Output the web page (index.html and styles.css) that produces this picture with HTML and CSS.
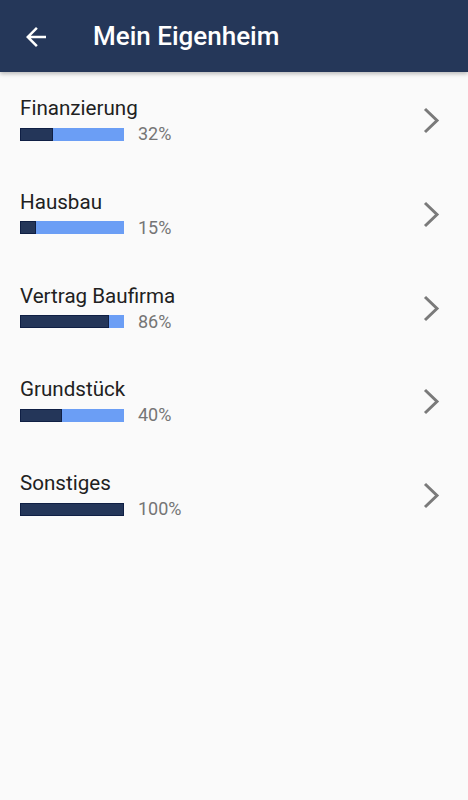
FILE: index.html
```html
<!DOCTYPE html>
<html lang="de">
<head>
    <meta charset="UTF-8">
    <meta name="viewport" content="width=device-width, initial-scale=1.0">
    <title>Mein Eigenheim</title>
    <link rel="stylesheet" href="styles.css">
</head>
<body>
    <header class="toolbar">
        <button class="back" aria-label="Zurück">
            <svg width="30" height="30" viewBox="0 0 24 24">
                <path d="M20 11H7.83l5.59-5.59L12 4l-8 8 8 8 1.41-1.41L7.83 13H20v-2z" fill="#fff"/>
            </svg>
        </button>
        <h1>Mein Eigenheim</h1>
    </header>

    <ul class="list">
        <li class="item">
            <div class="info">
                <div class="name">Finanzierung</div>
                <div class="progress">
                    <div class="bar"><div class="fill" style="width: 32%"></div></div>
                    <span class="pct">32%</span>
                </div>
            </div>
            <svg class="chevron" width="18" height="28" viewBox="0 0 18 28"><polyline points="3,3 15,14.5 3,26"/></svg>
        </li>
        <li class="item">
            <div class="info">
                <div class="name">Hausbau</div>
                <div class="progress">
                    <div class="bar"><div class="fill" style="width: 15%"></div></div>
                    <span class="pct">15%</span>
                </div>
            </div>
            <svg class="chevron" width="18" height="28" viewBox="0 0 18 28"><polyline points="3,3 15,14.5 3,26"/></svg>
        </li>
        <li class="item">
            <div class="info">
                <div class="name">Vertrag Baufirma</div>
                <div class="progress">
                    <div class="bar"><div class="fill" style="width: 86%"></div></div>
                    <span class="pct">86%</span>
                </div>
            </div>
            <svg class="chevron" width="18" height="28" viewBox="0 0 18 28"><polyline points="3,3 15,14.5 3,26"/></svg>
        </li>
        <li class="item">
            <div class="info">
                <div class="name">Grundstück</div>
                <div class="progress">
                    <div class="bar"><div class="fill" style="width: 40%"></div></div>
                    <span class="pct">40%</span>
                </div>
            </div>
            <svg class="chevron" width="18" height="28" viewBox="0 0 18 28"><polyline points="3,3 15,14.5 3,26"/></svg>
        </li>
        <li class="item">
            <div class="info">
                <div class="name">Sonstiges</div>
                <div class="progress">
                    <div class="bar"><div class="fill" style="width: 100%"></div></div>
                    <span class="pct">100%</span>
                </div>
            </div>
            <svg class="chevron" width="18" height="28" viewBox="0 0 18 28"><polyline points="3,3 15,14.5 3,26"/></svg>
        </li>
    </ul>
</body>
</html>
```

FILE: styles.css
```css
body {
    margin: 0;
    font-family: Roboto, 'Liberation Sans', sans-serif;
    background-color: #fafafa;
    color: #212121;
}
.toolbar {
    height: 72px;
    display: flex;
    align-items: center;
    background-color: #253759;
    box-shadow: 0 2px 4px rgba(0,0,0,0.25);
    position: relative;
}
.back {
    background: none;
    border: none;
    padding: 0;
    margin-left: 21px;
    margin-top: 2px;
    width: 30px;
    height: 30px;
}
.back svg {
    display: block;
}
.toolbar h1 {
    margin: 0 0 0 42px;
    font-size: 26px;
    font-weight: 500;
    color: #fff;
}
.list {
    list-style: none;
    margin: 0;
    padding: 0;
}
.item {
    display: flex;
    align-items: center;
    padding: 24px 28px 22px 20px;
    margin-bottom: -0.25px;
}
.info {
    flex: 1;
}
.name {
    font-size: 20.6px;
    line-height: 24px;
    margin-bottom: 4px;
}
.progress {
    display: flex;
    align-items: center;
    height: 20px;
}
.bar {
    width: 104px;
    height: 13px;
    background-color: #6b9ef5;
    box-sizing: border-box;
}
.fill {
    height: 100%;
    background-color: #243659;
    border: 1px solid #0f1f44;
    box-sizing: border-box;
}
.pct {
    margin-left: 14px;
    font-size: 18px;
    line-height: 20px;
    color: #757575;
}
.chevron {
    display: block;
}
.chevron polyline {
    fill: none;
    stroke: #7a7a7a;
    stroke-width: 3;
}
```
